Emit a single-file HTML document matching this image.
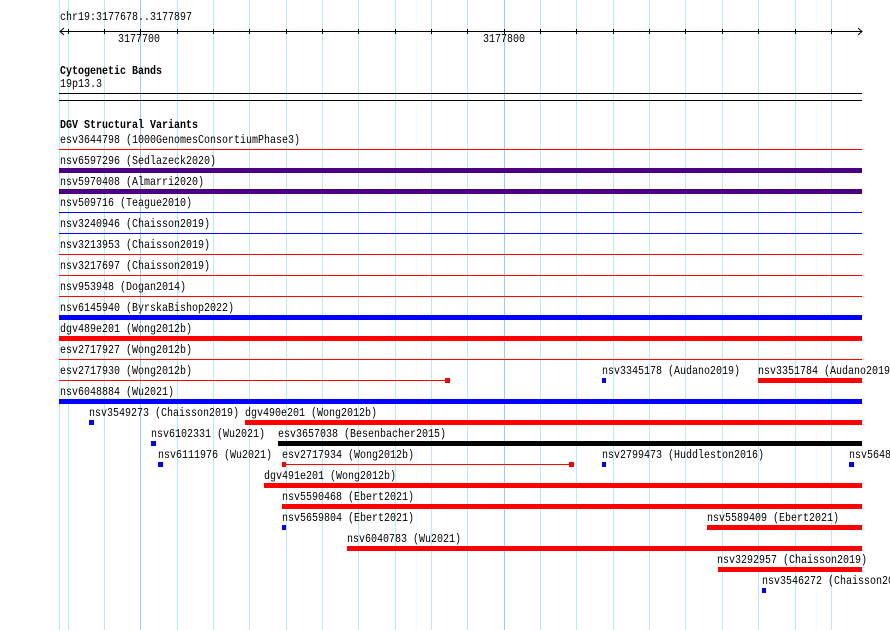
<!DOCTYPE html>
<html><head><meta charset="utf-8"><style>
body{margin:0;width:890px;height:630px;background:#fff;position:relative;overflow:hidden}
.g{position:absolute;top:0;width:1px;height:630px;background:#b4eef2}
.d{background:#8fd2ee}
.t{position:absolute;font-family:"Liberation Mono",monospace;font-size:12px;line-height:12px;white-space:nowrap;transform:scaleX(.833);transform-origin:0 0;color:#000;margin-top:-2px}
.b{font-weight:bold}
.r{position:absolute;height:1px}
.k{position:absolute;height:5px}
.R{background:#f00}.B{background:#00f}.P{background:#4b0082}.K{background:#000}
</style></head><body>
<div class="g" style="left:59px"></div>
<div class="g" style="left:68px"></div><div class="g" style="left:104px"></div><div class="g d" style="left:140px"></div><div class="g" style="left:177px"></div><div class="g" style="left:213px"></div><div class="g" style="left:249px"></div><div class="g" style="left:286px"></div><div class="g" style="left:322px"></div><div class="g" style="left:358px"></div><div class="g" style="left:395px"></div><div class="g" style="left:431px"></div><div class="g" style="left:467px"></div><div class="g d" style="left:504px"></div><div class="g" style="left:540px"></div><div class="g" style="left:576px"></div><div class="g" style="left:613px"></div><div class="g" style="left:649px"></div><div class="g" style="left:685px"></div><div class="g" style="left:722px"></div><div class="g" style="left:758px"></div><div class="g" style="left:795px"></div><div class="g" style="left:831px"></div>

<svg style="position:absolute;left:0;top:0" width="890" height="60">
<line x1="60" y1="31.5" x2="862" y2="31.5" stroke="#000"/>
<polyline points="64,28 60,31.5 64,35" fill="none" stroke="#000"/>
<polyline points="858,28 862,31.5 858,35" fill="none" stroke="#000"/>
<g stroke="#000">
<line x1="68.5" y1="29" x2="68.5" y2="34"/><line x1="104.5" y1="29" x2="104.5" y2="34"/><line x1="140.5" y1="29" x2="140.5" y2="34"/><line x1="177.5" y1="29" x2="177.5" y2="34"/><line x1="213.5" y1="29" x2="213.5" y2="34"/><line x1="249.5" y1="29" x2="249.5" y2="34"/><line x1="286.5" y1="29" x2="286.5" y2="34"/><line x1="322.5" y1="29" x2="322.5" y2="34"/><line x1="358.5" y1="29" x2="358.5" y2="34"/><line x1="395.5" y1="29" x2="395.5" y2="34"/><line x1="431.5" y1="29" x2="431.5" y2="34"/><line x1="467.5" y1="29" x2="467.5" y2="34"/><line x1="504.5" y1="29" x2="504.5" y2="34"/><line x1="540.5" y1="29" x2="540.5" y2="34"/><line x1="576.5" y1="29" x2="576.5" y2="34"/><line x1="613.5" y1="29" x2="613.5" y2="34"/><line x1="649.5" y1="29" x2="649.5" y2="34"/><line x1="685.5" y1="29" x2="685.5" y2="34"/><line x1="722.5" y1="29" x2="722.5" y2="34"/><line x1="758.5" y1="29" x2="758.5" y2="34"/><line x1="795.5" y1="29" x2="795.5" y2="34"/><line x1="831.5" y1="29" x2="831.5" y2="34"/>
</g></svg>
<div class="t" style="left:60px;top:13px">chr19:3177678..3177897</div>
<div class="t" style="left:118px;top:35px">3177700</div>
<div class="t" style="left:483px;top:35px">3177800</div>
<div class="t b" style="left:60px;top:67px">Cytogenetic Bands</div>
<div class="t" style="left:60px;top:80px">19p13.3</div>
<div class="r K" style="left:59px;top:93px;width:803px"></div>
<div class="r K" style="left:59px;top:100px;width:803px"></div>
<div class="t b" style="left:60px;top:121px">DGV Structural Variants</div>

<div class="t" style="left:60px;top:136px">esv3644798 (1000GenomesConsortiumPhase3)</div>
<div class="r R" style="left:59px;top:149px;width:803px"></div>
<div class="t" style="left:60px;top:157px">nsv6597296 (Sedlazeck2020)</div>
<div class="k P" style="left:59px;top:168px;width:803px"></div>
<div class="t" style="left:60px;top:178px">nsv5970408 (Almarri2020)</div>
<div class="k P" style="left:59px;top:189px;width:803px"></div>
<div class="t" style="left:60px;top:199px">nsv509716 (Teague2010)</div>
<div class="r B" style="left:59px;top:212px;width:803px"></div>
<div class="t" style="left:60px;top:220px">nsv3240946 (Chaisson2019)</div>
<div class="r B" style="left:59px;top:233px;width:803px"></div>
<div class="t" style="left:60px;top:241px">nsv3213953 (Chaisson2019)</div>
<div class="r R" style="left:59px;top:254px;width:803px"></div>
<div class="t" style="left:60px;top:262px">nsv3217697 (Chaisson2019)</div>
<div class="r R" style="left:59px;top:275px;width:803px"></div>
<div class="t" style="left:60px;top:283px">nsv953948 (Dogan2014)</div>
<div class="r R" style="left:59px;top:296px;width:803px"></div>
<div class="t" style="left:60px;top:304px">nsv6145940 (ByrskaBishop2022)</div>
<div class="k B" style="left:59px;top:315px;width:803px"></div>
<div class="t" style="left:60px;top:325px">dgv489e201 (Wong2012b)</div>
<div class="k R" style="left:59px;top:336px;width:803px"></div>
<div class="t" style="left:60px;top:346px">esv2717927 (Wong2012b)</div>
<div class="r R" style="left:59px;top:359px;width:803px"></div>
<div class="t" style="left:60px;top:367px">esv2717930 (Wong2012b)</div>
<div class="r R" style="left:59px;top:380px;width:388px"></div>
<div class="k R" style="left:445px;top:378px;width:5px"></div>
<div class="t" style="left:602px;top:367px">nsv3345178 (Audano2019)</div>
<div class="k B" style="left:602px;top:378px;width:4px"></div>
<div class="t" style="left:758px;top:367px">nsv3351784 (Audano2019</div>
<div class="k R" style="left:758px;top:378px;width:104px"></div>
<div class="t" style="left:60px;top:388px">nsv6048884 (Wu2021)</div>
<div class="k B" style="left:59px;top:399px;width:803px"></div>
<div class="t" style="left:89px;top:409px">nsv3549273 (Chaisson2019)</div>
<div class="k B" style="left:89px;top:420px;width:5px"></div>
<div class="t" style="left:245px;top:409px">dgv490e201 (Wong2012b)</div>
<div class="k R" style="left:245px;top:420px;width:617px"></div>
<div class="t" style="left:151px;top:430px">nsv6102331 (Wu2021)</div>
<div class="k B" style="left:151px;top:441px;width:5px"></div>
<div class="t" style="left:278px;top:430px">esv3657038 (Besenbacher2015)</div>
<div class="k K" style="left:278px;top:441px;width:584px"></div>
<div class="t" style="left:158px;top:451px">nsv6111976 (Wu2021)</div>
<div class="k B" style="left:158px;top:462px;width:5px"></div>
<div class="t" style="left:282px;top:451px">esv2717934 (Wong2012b)</div>
<div class="k R" style="left:282px;top:462px;width:4px"></div>
<div class="r R" style="left:282px;top:464px;width:290px"></div>
<div class="k R" style="left:569px;top:462px;width:5px"></div>
<div class="t" style="left:602px;top:451px">nsv2799473 (Huddleston2016)</div>
<div class="k B" style="left:602px;top:462px;width:4px"></div>
<div class="t" style="left:849px;top:451px">nsv5648</div>
<div class="k B" style="left:849px;top:462px;width:5px"></div>
<div class="t" style="left:264px;top:472px">dgv491e201 (Wong2012b)</div>
<div class="k R" style="left:264px;top:483px;width:598px"></div>
<div class="t" style="left:282px;top:493px">nsv5590468 (Ebert2021)</div>
<div class="k R" style="left:282px;top:504px;width:580px"></div>
<div class="t" style="left:282px;top:514px">nsv5659804 (Ebert2021)</div>
<div class="k B" style="left:282px;top:525px;width:4px"></div>
<div class="t" style="left:707px;top:514px">nsv5589409 (Ebert2021)</div>
<div class="k R" style="left:707px;top:525px;width:155px"></div>
<div class="t" style="left:347px;top:535px">nsv6040783 (Wu2021)</div>
<div class="k R" style="left:347px;top:546px;width:515px"></div>
<div class="t" style="left:717px;top:556px">nsv3292957 (Chaisson2019)</div>
<div class="k R" style="left:718px;top:567px;width:144px"></div>
<div class="t" style="left:762px;top:577px">nsv3546272 (Chaisson20</div>
<div class="k B" style="left:762px;top:588px;width:4px"></div>
</body></html>
